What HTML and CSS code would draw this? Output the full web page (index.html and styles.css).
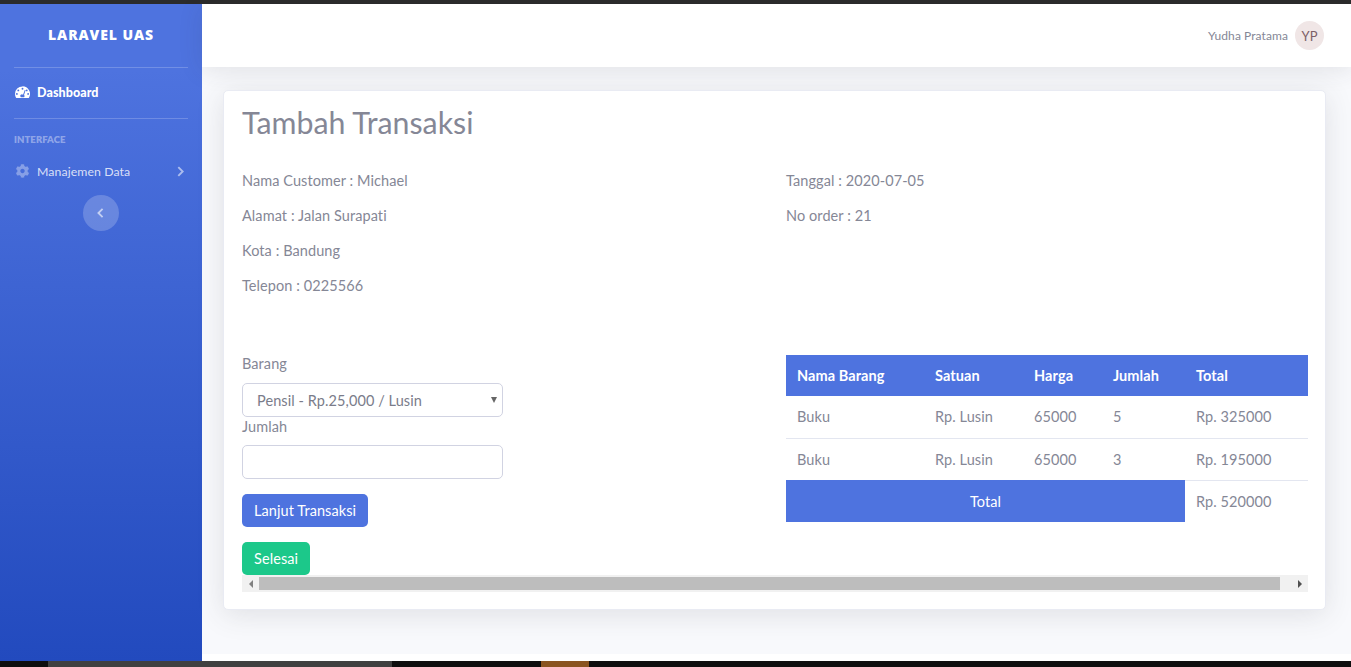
FILE: index.html
```html
<!DOCTYPE html>
<html lang="en">
<head>
    <meta charset="UTF-8">
    <title>Tambah Transaksi</title>
    <link rel="stylesheet" href="styles.css">
</head>
<body>
<div class="top-strip"></div>
<div class="app">
    <aside class="sidebar">
        <div class="brand">LARAVEL UAS</div>
        <hr class="side-line">
        <a class="side-link active">
            <svg class="side-icon" viewBox="0 0 16 14"><path fill-rule="evenodd" d="M8 1a8 8 0 0 0-8 8c0 1.500.4 2.900 1.100 4.100.200.300.500.400.800.400h12.200c.300 0 .600-.100.800-.400A8 8 0 0 0 8 1zM8 2.500a1 1 0 1 1 0 2 1 1 0 0 1 0-2zM3.500 4.300a1 1 0 1 1 0 2 1 1 0 0 1 0-2zM12.500 4.300a1 1 0 1 1 0 2 1 1 0 0 1 0-2zM2 8a1 1 0 1 1 0 2 1 1 0 0 1 0-2zM14 8a1 1 0 1 1 0 2 1 1 0 0 1 0-2zM10.400 4.800l.900.300-1.700 5.100a1.600 1.600 0 0 1 .100 2.300H6.300a1.600 1.600 0 0 1 2.300-2.600z"/></svg>
            <span>Dashboard</span>
        </a>
        <hr class="side-line">
        <div class="side-heading">INTERFACE</div>
        <a class="side-link">
            <svg class="side-icon cog" viewBox="0 0 512 512"><path d="M487.400 315.700l-42.600-24.600c4.300-23.200 4.300-47 0-70.200l42.600-24.600c4.900-2.800 7.100-8.600 5.500-14-11.100-35.600-30-67.800-54.700-94.600-3.800-4.100-10-5.100-14.800-2.300L380.800 110c-17.900-15.400-38.500-27.300-60.800-35.100V25.800c0-5.600-3.900-10.500-9.400-11.700-36.700-8.200-74.300-7.800-109.200 0-5.500 1.200-9.400 6.100-9.400 11.700V75c-22.200 7.900-42.800 19.800-60.800 35.100L88.700 85.500c-4.900-2.800-11-1.900-14.800 2.300-24.700 26.700-43.600 58.900-54.700 94.600-1.700 5.400.6 11.200 5.500 14L67.300 221c-4.300 23.200-4.300 47 0 70.200l-42.600 24.600c-4.900 2.800-7.100 8.600-5.500 14 11.100 35.600 30 67.800 54.700 94.600 3.800 4.100 10 5.100 14.800 2.300l42.600-24.600c17.900 15.400 38.500 27.300 60.800 35.100v49.200c0 5.600 3.900 10.500 9.400 11.700 36.700 8.200 74.300 7.800 109.200 0 5.500-1.200 9.400-6.100 9.400-11.700v-49.200c22.200-7.900 42.800-19.800 60.800-35.100l42.600 24.600c4.900 2.800 11 1.900 14.800-2.300 24.700-26.700 43.600-58.900 54.700-94.600 1.500-5.500-.7-11.300-5.600-14.100zM256 336c-44.100 0-80-35.900-80-80s35.900-80 80-80 80 35.900 80 80-35.900 80-80 80z"/></svg>
            <span>Manajemen Data</span>
            <svg class="chevron" viewBox="0 0 8 12"><path d="M1.500 1l5 5-5 5" fill="none" stroke="currentColor" stroke-width="2.200"/></svg>
        </a>
        <div class="toggle">
            <svg viewBox="0 0 8 12"><path d="M6.500 1l-5 5 5 5" fill="none" stroke="currentColor" stroke-width="2.200"/></svg>
        </div>
    </aside>
    <div class="main">
        <header class="topbar">
            <span class="user-name">Yudha Pratama</span>
            <span class="avatar">YP</span>
        </header>
        <div class="content">
            <div class="card">
                <h1 class="title">Tambah Transaksi</h1>
                <div class="columns info">
                    <div>
                        <p>Nama Customer : Michael</p>
                        <p>Alamat : Jalan Surapati</p>
                        <p>Kota : Bandung</p>
                        <p>Telepon : 0225566</p>
                    </div>
                    <div>
                        <p>Tanggal : 2020-07-05</p>
                        <p>No order : 21</p>
                    </div>
                </div>
                <div class="columns form-row">
                    <form action="javascript:void(0);" class="order-form">
                        <label class="label-barang">Barang</label>
                        <div class="select-wrap">
                            <select class="field">
                                <option>Pensil - Rp.25,000 / Lusin</option>
                            </select>
                        </div>
                        <label class="label-jumlah">Jumlah</label>
                        <input type="text" class="field">
                        <button class="btn btn-blue">Lanjut Transaksi</button>
                        <button class="btn btn-green">Selesai</button>
                    </form>
                    <table>
                        <tr>
                            <th class="c-name">Nama Barang</th>
                            <th class="c-unit">Satuan</th>
                            <th class="c-price">Harga</th>
                            <th class="c-qty">Jumlah</th>
                            <th>Total</th>
                        </tr>
                        <tr>
                            <td>Buku</td>
                            <td>Rp. Lusin</td>
                            <td>65000</td>
                            <td>5</td>
                            <td>Rp. 325000</td>
                        </tr>
                        <tr>
                            <td>Buku</td>
                            <td>Rp. Lusin</td>
                            <td>65000</td>
                            <td>3</td>
                            <td>Rp. 195000</td>
                        </tr>
                        <tr>
                            <th colspan="4" class="sum-label">Total</th>
                            <td class="sum-value">Rp. 520000</td>
                        </tr>
                    </table>
                </div>
                <div class="scrollbar">
                    <span class="arrow arrow-left"></span>
                    <span class="thumb"></span>
                    <span class="arrow arrow-right"></span>
                </div>
            </div>
        </div>
        <div class="footer"></div>
    </div>
</div>
<div class="bottom-strip">
    <span class="task-a"></span>
    <span class="task-b"></span>
</div>
</body>
</html>
```

FILE: styles.css
```css
* {
    box-sizing: border-box;
}

html, body {
    height: 100%;
}

body {
    margin: 0;
    display: flex;
    flex-direction: column;
    overflow: hidden;
    font-family: "Lato", "Open Sans", sans-serif;
    font-size: 14.5px;
    letter-spacing: .08px;
    color: #858796;
    background-color: #fff;
}

.top-strip {
    height: 4px;
    background-color: #2b2b2b;
}

.app {
    flex: 1;
    display: flex;
    min-height: 0;
}

.bottom-strip {
    height: 6px;
    background-color: #0e0e0e;
    display: flex;
}

.task-a {
    width: 344px;
    margin-left: 48px;
    background-color: #404040;
}

.task-b {
    width: 48px;
    margin-left: 149px;
    background-color: #8a5420;
}

/* sidebar */
.sidebar {
    width: 202px;
    padding: 0 14px;
    display: flex;
    flex-direction: column;
    background: linear-gradient(180deg, #4e73df 10%, #224abe 100%);
    color: #fff;
}

.brand {
    height: 63px;
    padding-top: 22px;
    text-align: center;
    font-family: "Open Sans", sans-serif;
    font-size: 14px;
    line-height: 18px;
    font-weight: 800;
    letter-spacing: .9px;
}

.side-line {
    width: 100%;
    margin: 0;
    border: 0;
    border-top: 1px solid rgba(255,255,255,.2);
}

.side-link {
    height: 50px;
    display: flex;
    align-items: center;
    font-size: 12.3px;
    color: rgba(255,255,255,.8);
}

.side-link.active {
    padding-bottom: 2px;
    color: #fff;
    font-size: 12.5px;
    font-weight: 900;
}

.side-icon {
    width: 15px;
    height: 14px;
    margin: 0 7px 0 1px;
    fill: currentColor;
    flex: none;
}

.cog {
    fill: rgba(255,255,255,.35);
}

.chevron {
    width: 7px;
    height: 11px;
    margin-left: auto;
    margin-right: 4px;
    color: rgba(255,255,255,.55);
}

.side-heading {
    margin-top: 16px;
    font-size: 9.500px;
    line-height: 10px;
    font-weight: 800;
    color: rgba(255,255,255,.4);
}

.side-heading + .side-link {
    height: 44px;
    margin-top: 4px;
    margin-bottom: 2px;
}

.toggle {
    width: 36px;
    height: 36px;
    margin: 0 auto;
    border-radius: 50%;
    background-color: rgba(255,255,255,.2);
    display: flex;
    align-items: center;
    justify-content: center;
    padding-right: 2px;
    color: rgba(255,255,255,.6);
}

.toggle svg {
    width: 7px;
    height: 10px;
}

/* main */
.main {
    flex: 1;
    display: flex;
    flex-direction: column;
    min-width: 0;
    background-color: #f8f9fc;
}

.topbar {
    height: 63px;
    display: flex;
    align-items: center;
    justify-content: flex-end;
    padding-right: 27px;
    background-color: #fff;
    box-shadow: 0 3px 24px rgba(58,59,69,.12);
}

.user-name {
    font-size: 12px;
    margin-right: 7px;
}

.avatar {
    width: 29px;
    height: 29px;
    border-radius: 50%;
    background-color: #f0e6e6;
    color: #7d5f66;
    font-size: 13px;
    display: flex;
    align-items: center;
    justify-content: center;
}

.content {
    flex: 1;
    padding: 23px 25px 0 21px;
}

.card {
    height: 520px;
    padding: 0 17px 0 18px;
    background-color: #fff;
    border: 1px solid #e9ebf3;
    border-radius: 5px;
    box-shadow: 0 5px 28px rgba(58,59,69,.13);
}

.title {
    margin: 0;
    padding-top: 13px;
    font-size: 30.300px;
    line-height: 36px;
    font-weight: 400;
    letter-spacing: 0;
}

.columns {
    display: grid;
    grid-template-columns: 522px 522px;
    column-gap: 22px;
}

.info {
    margin-top: 30.500px;
    height: 183.500px;
}

.info p {
    margin: 0;
    height: 35.300px;
    line-height: 20px;
}

.form-row {
    height: 221px;
}

.order-form {
    display: flex;
    flex-direction: column;
    align-items: flex-start;
}

.label-barang {
    line-height: 20px;
}

.label-jumlah {
    line-height: 20px;
}

.select-wrap {
    position: relative;
    margin-top: 9px;
    height: 34px;
}

.select-wrap::after {
    content: "";
    position: absolute;
    right: 6px;
    top: 14px;
    border-left: 3.500px solid transparent;
    border-right: 3.500px solid transparent;
    border-top: 6px solid #666;
}

.field {
    width: 261px;
    height: 34px;
    border: 1px solid #d1d3e2;
    border-radius: 5px;
    background-color: #fff;
    font: inherit;
    letter-spacing: inherit;
    color: #7a7c8a;
}

select.field {
    appearance: none;
    padding-left: 14px;
}

input.field {
    margin-top: 8px;
}

.btn {
    height: 33px;
    padding: 0 12px;
    border: 0;
    border-radius: 5px;
    font: inherit;
    letter-spacing: inherit;
    color: #fff;
}

.btn-blue {
    margin-top: 15px;
    background-color: #4e73df;
}

.btn-green {
    margin-top: 15px;
    background-color: #1cc88a;
}

table {
    border-collapse: collapse;
    width: 522px;
    height: 167px;
    align-self: start;
    margin-top: 1px;
}

th {
    height: 41px;
    padding: 0 11px;
    text-align: left;
    font-weight: 700;
    color: #fff;
    background-color: #4e73df;
}

td {
    height: 42px;
    padding: 0 11px;
    border-top: 1px solid #e3e6f0;
}

tr:nth-child(2) td {
    border-top: 0;
}

.c-name {
    width: 138px;
}

.c-unit {
    width: 99px;
}

.c-price {
    width: 79px;
}

.c-qty {
    width: 83px;
}

.sum-label {
    text-align: center;
    font-weight: 400;
}

/* scrollbar */
.scrollbar {
    height: 17px;
    display: flex;
    align-items: center;
    background-color: #f1f1f1;
}

.arrow {
    width: 17px;
    display: flex;
    justify-content: center;
    flex: none;
}

.arrow::before {
    content: "";
    border-top: 4px solid transparent;
    border-bottom: 4px solid transparent;
}

.arrow-left::before {
    border-right: 4px solid #808080;
}

.arrow-right {
    margin-left: 11px;
}

.arrow-right::before {
    border-left: 4px solid #505050;
}

.thumb {
    flex: 1;
    height: 13px;
    background-color: #bdbdbd;
}

.footer {
    height: 7px;
    background-color: #fff;
}
```
